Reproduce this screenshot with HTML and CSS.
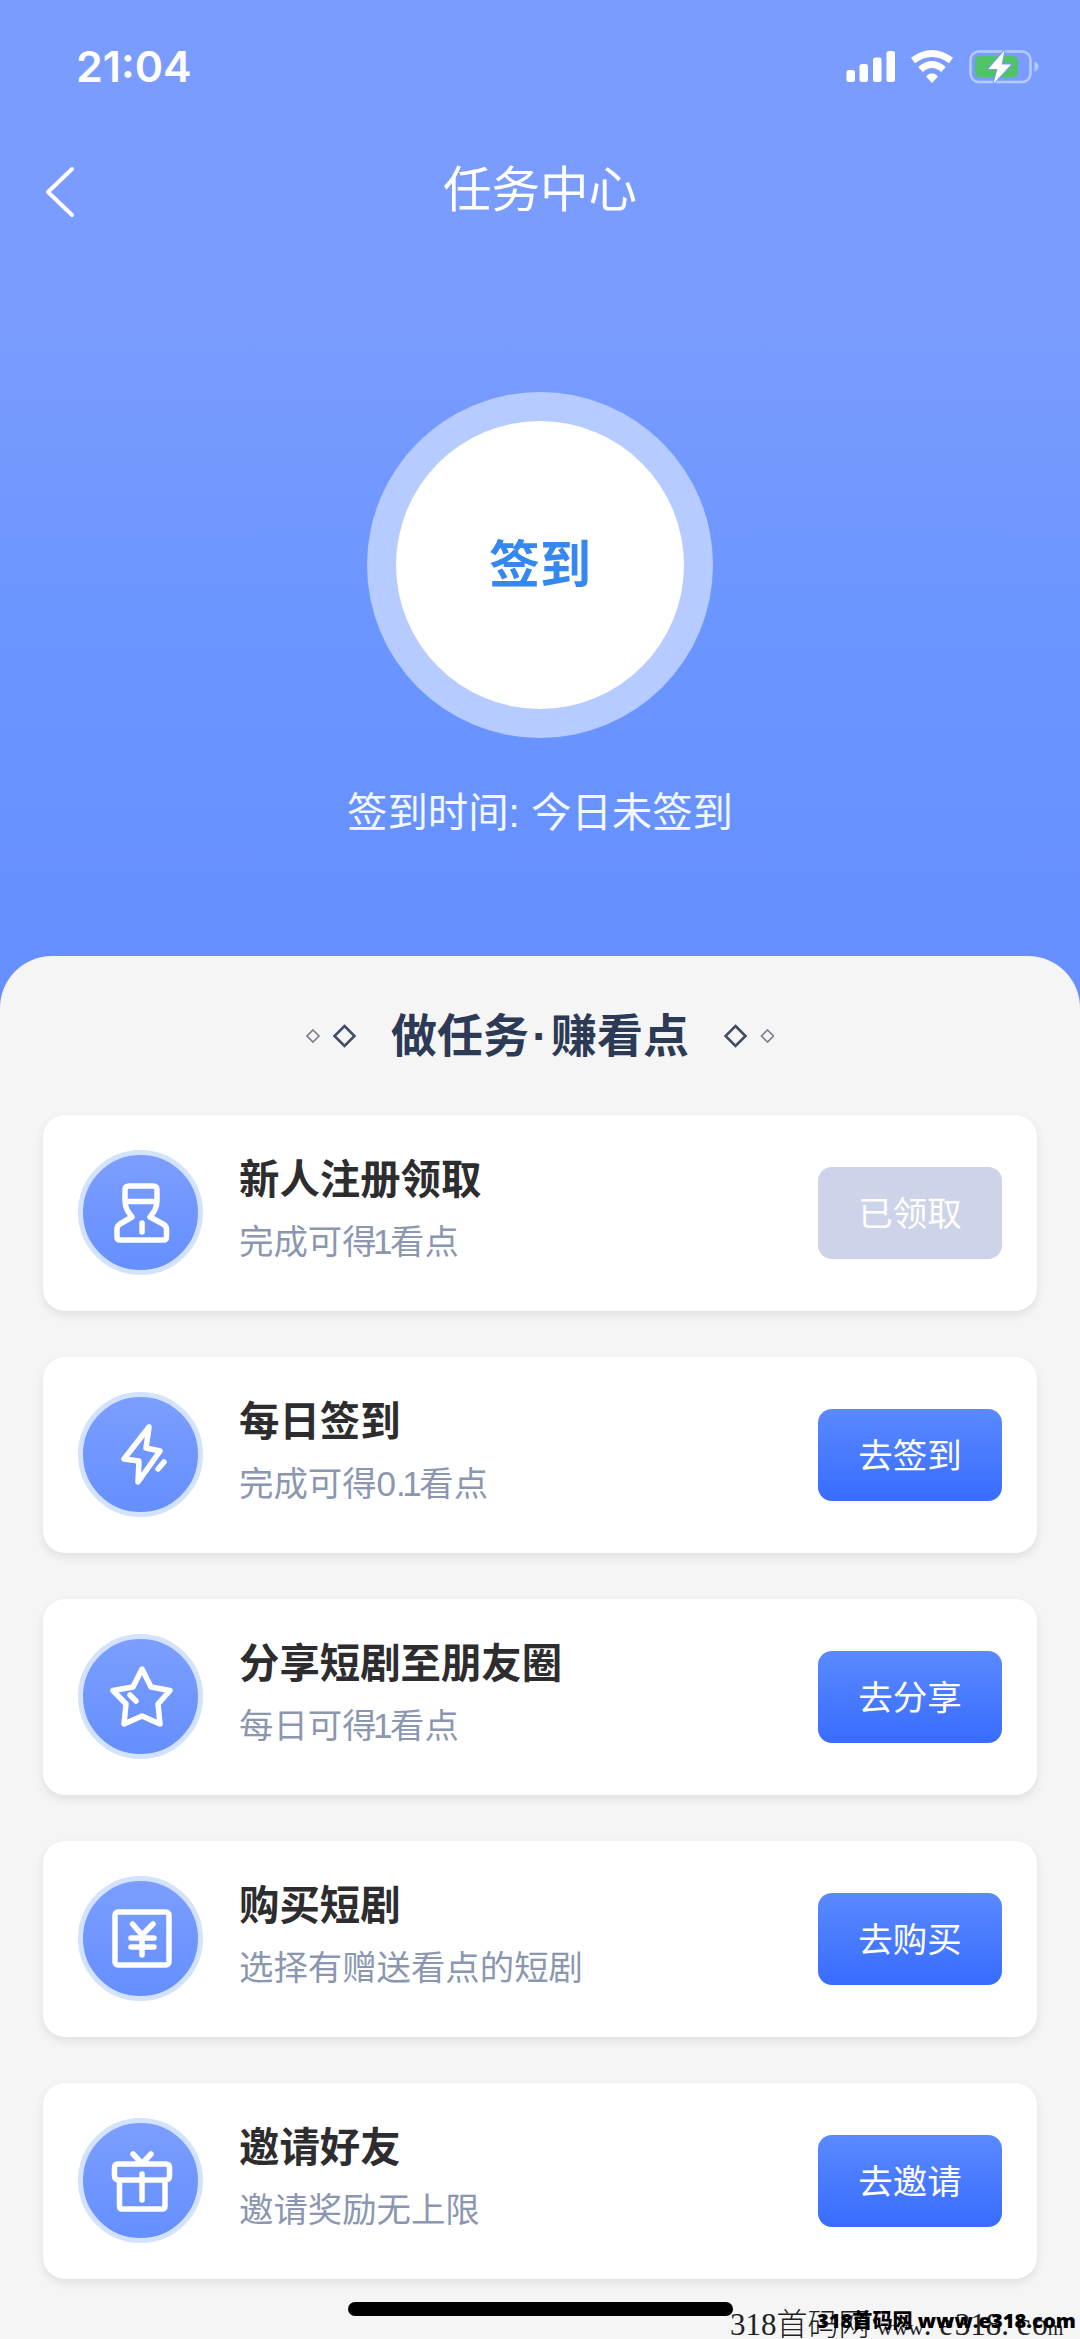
FILE: index.html
```html
<!DOCTYPE html>
<html lang="zh-CN">
<head>
<meta charset="utf-8">
<title>任务中心</title>
<link rel="stylesheet" href="styles.css">
</head>
<body>
<div class="screen">
  <header class="status">
    <span class="clock">21:04</span>
    <svg class="status-icons" width="194" height="36" viewBox="0 0 194 36">
      <g fill="#fff">
        <rect x="0.5" y="22" width="8.5" height="12" rx="2.5"/>
        <rect x="13.5" y="16" width="8.5" height="18" rx="2.5"/>
        <rect x="27" y="9.500" width="8.500" height="24.500" rx="2.500"/>
        <rect x="40.500" y="3" width="8.500" height="31" rx="2.500"/>
        <path d="M86 35 L80 28.500 Q86 22 92 28.500 Z"/>
      </g>
      <g fill="none" stroke="#fff" stroke-width="6.800">
        <path d="M67 12.500 Q86 -1.500 105 12.500"/>
        <path d="M74.500 21.500 Q86 11.500 97.500 21.500"/>
      </g>
      <rect x="124.500" y="3.500" width="60" height="30.500" rx="8.500" fill="none" stroke="#b5cbff" stroke-width="2.500"/>
      <path d="M188.500 13.500 Q192.500 15 192.500 18.500 Q192.500 22 188.500 23.500 Z" fill="#b5cbff"/>
      <rect x="129" y="8" width="43" height="21.500" rx="5" fill="#4fc466"/>
      <path d="M158.500 2.500 L142.500 21 H151.500 L147.500 35.500 L165 16.500 H155.500 Z" fill="#fff" stroke="#7b9cff" stroke-width="2" stroke-linejoin="round" paint-order="stroke"/>
    </svg>
  </header>

  <nav class="navbar">
    <svg class="back" width="34" height="54" viewBox="0 0 34 54" fill="none" stroke="#fff" stroke-width="4" stroke-linecap="round" stroke-linejoin="round"><path d="M30 4 L6 27 L30 50"/></svg>
    <h1 class="title">任务中心</h1>
  </nav>

  <section class="checkin">
    <div class="ring"><div class="disc">签到</div></div>
    <p class="checkin-time">签到时间: 今日未签到</p>
  </section>

  <main class="panel">
    <div class="heading">
      <svg width="50" height="26" viewBox="0 0 50 26" fill="none"><path d="M7 7 L13 13 L7 19 L1 13 Z" stroke="#7b828e" stroke-width="1.700"/><path d="M38.500 3 L48.500 13 L38.500 23 L28.500 13 Z" stroke="#414d64" stroke-width="2.600"/></svg>
      <h2>做任务<span class="dot">·</span>赚看点</h2>
      <svg width="50" height="26" viewBox="0 0 50 26" fill="none"><path d="M11.500 3 L21.500 13 L11.500 23 L1.500 13 Z" stroke="#414d64" stroke-width="2.600"/><path d="M43.500 7 L49.500 13 L43.500 19 L37.500 13 Z" stroke="#7b828e" stroke-width="1.700"/></svg>
    </div>

    <ul class="tasks">
      <li class="card">
        <span class="badge"><svg class="glyph" viewBox="0 0 64 64"><path d="M20 6 H44 Q48 6 48 10 V20 C48 28 45 32 41 37 L54 44 Q57.500 46 57.500 49 V57 Q57.500 60 54.500 60 H11 Q8 60 8 57 V49 Q8 46 11 44 L23 37 C19 32 16 28 16 20 V10 Q16 6 20 6 Z M17 21.500 H47 M33 43 V52"/></svg></span>
        <div class="info"><h3>新人注册领取</h3><p>完成可得<span class="one">1</span>看点</p></div>
        <button class="action done">已领取</button>
      </li>
      <li class="card">
        <span class="badge"><svg class="glyph" viewBox="0 0 64 64"><path d="M40 5 L15 37 L30 39 L29 60 L51 29 L37 26 Z M55 40 L49 47"/></svg></span>
        <div class="info"><h3>每日签到</h3><p>完成可得<span class="num">0.</span><span class="one">1</span>看点</p></div>
        <button class="action">去签到</button>
      </li>
      <li class="card">
        <span class="badge"><svg class="glyph" viewBox="0 0 64 64"><path d="M33 5 L42 23 L61 26.500 L49 40 L51 60 L33 52 L15 60 L17 40 L4 26.500 L24 23 Z M21 31 L27 37"/></svg></span>
        <div class="info"><h3>分享短剧至朋友圈</h3><p>每日可得<span class="one">1</span>看点</p></div>
        <button class="action">去分享</button>
      </li>
      <li class="card">
        <span class="badge"><svg class="glyph" viewBox="0 0 64 64"><rect x="6" y="6" width="54" height="53" rx="3"/><path d="M23.500 18 L33 29 M44 18 L33 29 V49 M22 32 H45 M22 41 H45"/></svg></span>
        <div class="info"><h3>购买短剧</h3><p>选择有赠送看点的短剧</p></div>
        <button class="action">去购买</button>
      </li>
      <li class="card">
        <span class="badge"><svg class="glyph" viewBox="0 0 64 64"><path d="M10 32 Q5.500 32 5.500 28 V20 Q5.500 16 9 16 H57 Q60.500 16 60.500 20 V28 Q60.500 32 56 32 Z M10.500 32 V58 Q10.500 61 13 61 H53 Q56 61 56 58 V32 M33 26 V52 M24 6 L33 15.500 L42 6"/></svg></span>
        <div class="info"><h3>邀请好友</h3><p>邀请奖励无上限</p></div>
        <button class="action">去邀请</button>
      </li>
    </ul>
  </main>

  <div class="home-bar"></div>
  <div class="mark-thin">318首码网 <span class="w">www</span><span class="p">.</span><span class="e">e</span>318<span class="p">.</span><span class="e">c</span>o<span class="m">m</span></div>
  <div class="mark-bold">318首码网 www.e318.com</div>
</div>
</body>
</html>
```
FILE: styles.css
```css
* { box-sizing: border-box; margin: 0; padding: 0; }

body {
  width: 1080px;
  height: 2339px;
  overflow: hidden;
  font-family: "Liberation Sans", "Noto Sans CJK SC", sans-serif;
}

.screen {
  position: relative;
  display: flex;
  flex-direction: column;
  height: 2339px;
  overflow: hidden;
  background: linear-gradient(#7b9cff 0, #7b9cff 300px, #6b96ff 620px, #668fff 956px);
}

.status {
  display: flex;
  align-items: center;
  justify-content: space-between;
  height: 132px;
  padding: 0 40px 0 76px;
}
.clock {
  color: #fff;
  font: 600 43px/1 "Inter", sans-serif;
}

.navbar {
  display: grid;
  grid-template-columns: 120px 1fr 120px;
  align-items: center;
  height: 118px;
}
.back { margin: 2px 0 0 42px; }
.title {
  margin-top: -2px;
  color: #fff;
  font-size: 48.5px;
  font-weight: 400;
  line-height: 72px;
  text-align: center;
}

.checkin {
  display: flex;
  flex-direction: column;
  align-items: center;
  height: 706px;
  padding-top: 142px;
}
.ring {
  padding: 29px;
  border-radius: 50%;
  background: #b6cbff;
}
.disc {
  display: grid;
  place-items: center;
  width: 288px;
  height: 288px;
  padding-bottom: 8px;
  border-radius: 50%;
  background: #fff;
  color: #3588f0;
  font-size: 51px;
  font-weight: 700;
}
.checkin-time {
  margin-top: 45px;
  color: #f2f8ff;
  font-size: 40.4px;
  line-height: 60px;
}

.panel {
  flex: 1;
  padding: 50px 43px 0;
  border-radius: 52px 52px 0 0;
  background: #f5f5f6;
}
.heading {
  display: flex;
  align-items: center;
  justify-content: center;
  gap: 35px;
  height: 60px;
}
.heading h2 {
  color: #2c3a55;
  font-size: 46px;
  font-weight: 700;
  line-height: 60px;
  white-space: nowrap;
}
.dot { display: inline-block; width: 22px; text-align: center; }

.tasks {
  display: flex;
  flex-direction: column;
  gap: 46px;
  margin-top: 49px;
  list-style: none;
}
.card {
  display: flex;
  align-items: center;
  height: 196px;
  padding: 0 35px;
  border-radius: 22px;
  background: #fff;
  box-shadow: 0 4px 8px rgba(60, 70, 90, 0.12);
}
.badge {
  display: grid;
  place-items: center;
  width: 125px;
  height: 125px;
  margin-bottom: 2px;
  border: 5px solid #d3e2ff;
  border-radius: 50%;
  background: linear-gradient(#7b9eff, #658fff);
}
.glyph {
  width: 64px;
  height: 64px;
  fill: none;
  stroke: #fff;
  stroke-width: 5.5;
  stroke-linecap: round;
  stroke-linejoin: round;
}
.info {
  flex: 1;
  padding: 0 0 5px 36px;
}
.info h3 {
  color: #2d2d2f;
  font-size: 40.4px;
  font-weight: 700;
  line-height: 62px;
}
.info p {
  color: #8b97b0;
  font-size: 34.4px;
  line-height: 62px;
}
.num { font-size: 35px; }
.one { margin: 0 -2.500px 0 -3.500px; font-size: 35px; }
.action {
  width: 184px;
  height: 92px;
  padding-bottom: 5px;
  border: 0;
  border-radius: 14px;
  background: linear-gradient(#5a89ff, #386cff);
  color: #fff;
  font: 400 34.5px/86px "Noto Sans CJK SC", sans-serif;
}
.action.done { background: #cdd3e8; }

.home-bar {
  position: absolute;
  left: 348px;
  top: 2302px;
  width: 385px;
  height: 14px;
  border-radius: 7px;
  background: #000;
}
.mark-thin {
  position: absolute;
  left: 730px;
  top: 2307px;
  color: #222;
  font: 300 31px/36px "Liberation Serif", "Noto Sans CJK SC", serif;
  white-space: pre;
}
.w { font-size: 21.5px; }
.p { letter-spacing: 7.7px; }
.e { letter-spacing: 1.7px; }
.m { font-size: 20px; }
.mark-bold {
  position: absolute;
  left: 817px;
  top: 2307px;
  color: #000;
  font: 800 20.1px/28px "Open Sans", "Noto Sans CJK SC", sans-serif;
  white-space: pre;
}
```
